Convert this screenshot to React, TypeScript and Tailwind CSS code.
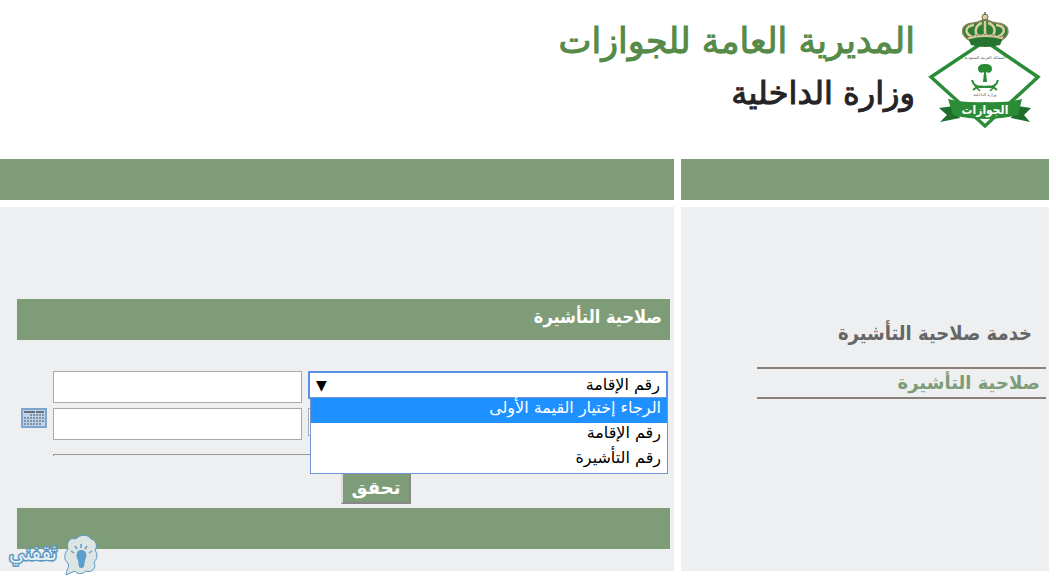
import { useState } from "react";

const options = ["الرجاء إختيار القيمة الأولى", "رقم الإقامة", "رقم التأشيرة"];

function Emblem() {
  return (
    <svg viewBox="1 0 128 130" className="h-[130px] w-32 shrink-0" role="img" aria-label="الجوازات">
      <path d="M65 36 L118 72 L65 121 L11 72 Z" fill="#fff" stroke="#2b8c37" strokeWidth="3.5" />
      {/* crown */}
      <path
        d="M49 35 C39 29 41 19 53 18 C60 17 63 16 65 13 C67 16 70 17 77 18 C90 19 91 29 82 35 Z"
        fill="#2f7d35"
        stroke="#8d8458"
        strokeWidth="1.5"
      />
      <path
        d="M52 32 C43 27 46 21 54 20 M59 32 C53 27 56 20 62 18 M78 32 C87 27 85 21 76 20 M71 32 C77 27 75 20 68 18 M65 16 V32"
        fill="none"
        stroke="#d8cfa0"
        strokeWidth="2.5"
      />
      <path d="M48 33 Q65 28 83 33 L80 40 Q65 44 51 40 Z" fill="#257430" />
      <path d="M48 33 Q65 28 83 33" fill="none" stroke="#cfc69b" strokeWidth="3" />
      <path d="M48 32 Q65 27 83 32" fill="none" stroke="#766d48" strokeWidth="1" strokeDasharray="2 2" />
      <circle cx="65" cy="12" r="3" fill="#d8cfa0" stroke="#766d48" />
      <path d="M65 7 V10" stroke="#766d48" strokeWidth="1.5" />
      <text x="65" y="54" textAnchor="middle" fontSize="4" fill="#555" fontFamily="DejaVu Sans, sans-serif">
        المملكة العربية السعودية
      </text>
      {/* palm and crossed swords */}
      <path
        d="M63 77 L64 67 C61 69 58 67 58 64 C58 60 61 59 65 59 C69 59 72 60 72 64 C72 67 69 69 66 67 L67 77 Z"
        fill="#2b8c37"
      />
      <path
        d="M52 75 Q54 83 64 82 Q72 80 77 85 M78 75 Q76 83 66 82 Q58 80 53 85"
        fill="none"
        stroke="#2b8c37"
        strokeWidth="2"
      />
      <path d="M55 81 L60 86 M75 81 L70 86" stroke="#2b8c37" strokeWidth="1.5" />
      <text x="65" y="91" textAnchor="middle" fontSize="4" fill="#555" fontFamily="DejaVu Sans, sans-serif">
        وزارة الداخلية
      </text>
      {/* ribbon */}
      <path d="M19 103 L34 101 L40 113 L20 117 L27 110 Z M111 103 L97 101 L91 113 L110 117 L104 110 Z" fill="#1f6e2b" />
      <path d="M28 94 Q45 98 65 97 Q86 98 102 94 L98 110 Q82 114 65 114 Q48 114 33 110 Z" fill="#2b8c37" />
      <text
        x="65"
        y="109"
        textAnchor="middle"
        fontSize="12"
        fontWeight="700"
        fill="#fff"
        fontFamily="DejaVu Sans Condensed, DejaVu Sans, sans-serif"
      >
        الجوازات
      </text>
    </svg>
  );
}

function CalendarIcon() {
  return (
    <svg viewBox="0 0 26 20" className="h-5 w-[26px]" aria-hidden="true">
      <rect x="1" y="1" width="24" height="18" fill="#bed2e8" stroke="#7da4cf" strokeWidth="2" />
      <path d="M3 4 H14 M15 4 H23" stroke="#66717f" strokeWidth="2" />
      <path d="M9 7 H23" stroke="#8292a6" strokeWidth="2" strokeDasharray="2 1" />
      <path d="M3 10 H23 M3 13 H23 M3 16 H21" stroke="#8292a6" strokeWidth="2" strokeDasharray="2 1" />
    </svg>
  );
}

function Watermark() {
  return (
    <svg viewBox="0 0 96 46" className="absolute -bottom-2 left-1 h-[46px] w-24" role="img" aria-label="ثقفني">
      <text
        x="29"
        y="27"
        textAnchor="middle"
        fontSize="22"
        fill="#e3eef3"
        stroke="#5b97c2"
        strokeWidth="3"
        strokeLinejoin="round"
        paintOrder="stroke"
        fontFamily="DejaVu Sans Condensed, DejaVu Sans, sans-serif"
      >
        ثقفني
      </text>
      <path
        d="M63 29 C59 26 61 19 64 16 C62 9 66 4 72 6 C76 1 84 1 87 6 C92 7 94 13 91 17 C95 23 92 27 90 29 C93 36 87 40 82 38 C78 42 73 41 71 38 L62 42 C62 37 67 33 63 29 Z"
        fill="#dce5e3"
        stroke="#5b97c2"
      />
      <path d="M77 17 C82 17 84 22 81 27 L80 34 Q77 36 75 34 L74 27 C71 22 73 17 77 17 Z" fill="#5b9dcc" />
      <path
        d="M77 15 V11 M73 16 L71 13 M81 16 L83 13 M70 20 L67 18 M85 20 L88 18"
        stroke="#5b9dcc"
        strokeWidth="1.5"
      />
    </svg>
  );
}

export default function App() {
  const [value, setValue] = useState(options[1]);
  const [open, setOpen] = useState(true);

  const choose = (option: string) => {
    setValue(option);
    setOpen(false);
  };

  return (
    <div dir="rtl" className="min-h-screen bg-white pr-[7px] font-['DejaVu_Sans',sans-serif]">
      <header className="flex gap-1.5 pt-[5px] pb-6">
        <Emblem />
        <div className="pt-2.5">
          <p className="text-[35px] leading-[52px] text-[#568a48] [-webkit-text-stroke:1px]">
            المديرية العامة للجوازات
          </p>
          <p className="text-[32px] leading-[52px] text-[#262324] [-webkit-text-stroke:1px]">وزارة الداخلية</p>
        </div>
      </header>

      <div className="flex gap-[7px]">
        <div className="h-[41px] w-[368px] shrink-0 bg-[#7d9c77]" />
        <div className="h-[41px] flex-1 bg-[#7d9c77]" />
      </div>

      <div className="mt-[7px] flex gap-[7px]">
        <aside className="w-[368px] shrink-0 bg-[#eeeff1] pt-[108px] pr-[3px] pl-19">
          <h2 className="px-3.5 font-['DejaVu_Sans_Condensed','DejaVu_Sans',sans-serif] text-xl leading-9 font-bold text-[#666]">
            خدمة صلاحية التأشيرة
          </h2>
          <nav className="mt-4 border-y-2 border-[#8c7f78] px-1.5">
            <a href="#visa" className="block text-lg leading-7 font-bold text-[#7d9c77]">
              صلاحية التأشيرة
            </a>
          </nav>
        </aside>

        <main className="relative flex-1 bg-[#eeeff1] pt-[92px] pr-1 pb-[22px] pl-[17px]">
          <h1 className="h-[41px] bg-[#7d9c77] px-2 font-['DejaVu_Sans_Condensed','DejaVu_Sans',sans-serif] text-lg leading-9 font-bold text-white">
            صلاحية التأشيرة
          </h1>

          <form className="mt-[31px]" onSubmit={(e) => e.preventDefault()}>
            <div className="flex gap-1.5 pr-0.5 pl-9">
              <div className="relative flex-1">
                <select
                  aria-label="نوع الرقم"
                  value={value}
                  onChange={(e) => setValue(e.target.value)}
                  onMouseDown={(e) => {
                    e.preventDefault();
                    setOpen(!open);
                  }}
                  className="h-7 w-full appearance-none border-2 border-[#5b8fe8] bg-white px-1.5 text-base leading-6 text-black outline-none"
                >
                  {options.map((option) => (
                    <option key={option}>{option}</option>
                  ))}
                </select>
                <span className="pointer-events-none absolute top-1 left-2 text-sm leading-5">▼</span>
                {open && (
                  <ul
                    role="listbox"
                    aria-label="نوع الرقم"
                    className="absolute top-[26px] right-0 left-0.5 z-10 border border-[#6f97d6] bg-white"
                  >
                    {options.map((option, i) => (
                      <li
                        key={option}
                        role="option"
                        aria-selected={option === value}
                        onClick={() => choose(option)}
                        className={`h-[25px] cursor-default px-1.5 text-base leading-5 ${
                          i === 0 ? "bg-[#1e90ff] text-white" : "text-black"
                        }`}
                      >
                        {option}
                      </li>
                    ))}
                  </ul>
                )}
              </div>
              <input aria-label="الرقم" className="h-8 w-[249px] border border-[#a9a9a9] bg-white px-1.5" />
            </div>

            <div className="mt-[5px] flex gap-1.5 pr-0.5 pl-1">
              <select
                aria-label="نوع التحقق"
                className="h-7 min-w-0 flex-1 appearance-none border border-[#a9a9a9] bg-white px-1.5"
              />
              <input aria-label="التاريخ" className="h-8 w-[249px] border border-[#a9a9a9] bg-white px-1.5" />
              <button type="button" aria-label="التقويم" className="h-5 w-[26px]">
                <CalendarIcon />
              </button>
            </div>

            <hr className="mt-3.5 mr-0.5 ml-9 h-0.5 border-t border-l border-[#999]" />
            <button
              type="submit"
              className="mt-4 mr-[259px] block h-8 w-[70px] border-2 border-t-[#ddd] border-r-[#888] border-b-[#888] border-l-[#ddd] bg-[#7d9c77] text-lg leading-7 font-bold text-white"
            >
              تحقق
            </button>
          </form>

          <div className="mt-1 h-[41px] bg-[#7d9c77]" />
          <Watermark />
        </main>
      </div>
    </div>
  );
}
